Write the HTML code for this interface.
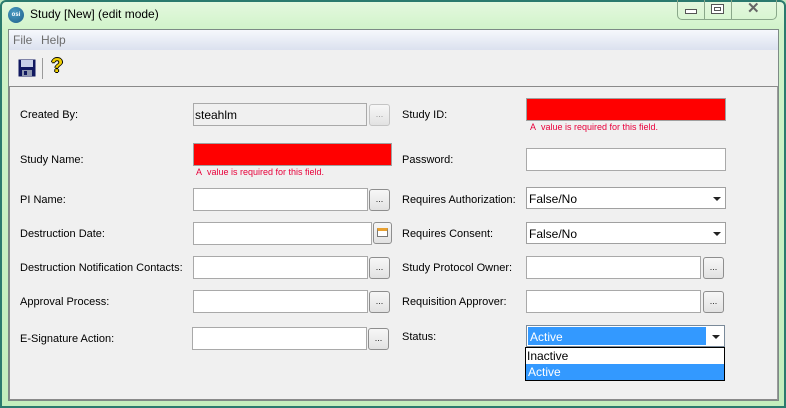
<!DOCTYPE html>
<html><head><meta charset="utf-8"><style>
*{margin:0;padding:0;box-sizing:border-box}
body{width:786px;height:408px;overflow:hidden;font-family:"Liberation Sans",Arial,sans-serif;font-size:11px;color:#000;position:relative;background:linear-gradient(#bfe9bf,#c8f0c0 40%,#b8e8b4);}
.a{position:absolute}
.frame{left:0;top:0;width:786px;height:408px;border:2px solid #2b7a6e;border-radius:6px 6px 0 0;background:linear-gradient(180deg,#e4f8de 0,#cff3c8 30px,#c3eebd 100%)}
.title{left:30px;top:7px;font-size:12px;color:#000}
.content{left:8px;top:29px;width:771px;height:372px;background:#f0f0f0;border:1px solid #7d8a86}
.menu{left:9px;top:30px;width:769px;height:20px;background:linear-gradient(#f6f8fc,#dbe1ef)}
.menu span{position:absolute;top:3px;color:#6d6d6d;font-size:12px}
.panel{left:9px;top:86px;width:769px;height:314px;border:1px solid #8a8a8a;border-right-color:#9a9a9a;background:#f0f0f0}
.lbl{position:absolute;font-size:11px;white-space:nowrap}
.in{position:absolute;background:#fff;border:1px solid #a9a9a9;height:23px}
.red{background:#ff0000;border-color:#a0a0a0}
.err{position:absolute;color:#e8003a;font-size:9px;white-space:nowrap}
.btn{position:absolute;width:21px;height:22px;border:1px solid #8e8e8e;border-radius:3px;background:linear-gradient(#f7f7f7,#e2e2e2);font-size:9px;text-align:center;line-height:19px;color:#222}
.cb{position:absolute;background:#fff;border:1px solid #a0a0a0;height:22px;padding:4px 2px;font-size:12px}
.cb .ar{position:absolute;right:4px;top:9px;width:0;height:0;border-left:4px solid transparent;border-right:4px solid transparent;border-top:4px solid #222}
</style></head><body>
<div class="a frame"></div>
<div class="a" style="left:8px;top:7px;width:16px;height:16px;border-radius:50%;background:radial-gradient(circle at 40% 35%,#4c9cc4,#1e5f88);color:#fff;font-size:6px;line-height:16px;text-align:center;font-weight:bold">osi</div>
<div class="a title">Study [New] (edit mode)</div>
<div class="a" style="left:677px;top:0;width:100px;height:20px;border:1px solid #8aa88a;border-top:none;border-radius:0 0 5px 5px"></div>
<div class="a" style="left:704px;top:0;width:1px;height:20px;background:#8aa88a"></div>
<div class="a" style="left:731px;top:0;width:1px;height:20px;background:#8aa88a"></div>
<div class="a" style="left:685px;top:9px;width:12px;height:5px;border:1px solid #555;background:#fff"></div>
<div class="a" style="left:711px;top:4px;width:13px;height:10px;border:1px solid #555;background:#fff"><div style="margin:2px;width:7px;height:4px;border:1px solid #555"></div></div>
<div class="a" style="left:747px;top:-1px;font-size:15px;color:#666;font-weight:bold">✕</div>
<div class="a content"></div>
<div class="a menu"><span style="left:4px">File</span><span style="left:32px">Help</span></div>
<svg class="a" style="left:18px;top:59px" width="18" height="18" viewBox="0 0 18 18"><rect x="0.5" y="0.5" width="17" height="17" fill="#101860"/><rect x="3" y="1" width="12" height="7" fill="#c8d0e8"/><rect x="4" y="11" width="10" height="6" fill="#9098b0"/><rect x="6" y="12" width="3" height="4" fill="#101860"/></svg>
<div class="a" style="left:42px;top:58px;width:1px;height:21px;background:#9a9a9a"></div>
<div class="a" style="left:51px;top:55px;font-size:20px;font-weight:bold;color:#f0d000;text-shadow:1px 0 #000,-1px 0 #000,0 1px #000,0 -1px #000">?</div>
<div class="a panel"></div>

<div class="lbl" style="left:20px;top:109px">Created By:</div>
<div class="in" style="left:193px;top:103px;width:174px;background:#f0f0f0;padding:4px 1px;font-size:12px">steahlm</div>
<div class="btn" style="left:369px;top:104px;color:#999;border-color:#c4c4c4">...</div>
<div class="lbl" style="left:20px;top:154px">Study Name:</div>
<div class="in red" style="left:193px;top:143px;width:199px"></div>
<div class="err" style="left:196px;top:167px">A&nbsp; value is required for this field.</div>
<div class="lbl" style="left:20px;top:194px">PI Name:</div>
<div class="in" style="left:193px;top:188px;width:175px"></div><div class="btn" style="left:369px;top:189px">...</div>
<div class="lbl" style="left:20px;top:228px">Destruction Date:</div>
<div class="in" style="left:193px;top:222px;width:179px"></div>
<div class="btn" style="left:373px;top:222px;width:19px"><div style="margin:5px auto 0;width:11px;height:9px;border:1px solid #777;border-top:3px solid #e8a030;background:#fff"></div></div>
<div class="lbl" style="left:20px;top:262px">Destruction Notification Contacts:</div>
<div class="in" style="left:193px;top:256px;width:175px"></div><div class="btn" style="left:369px;top:257px">...</div>
<div class="lbl" style="left:20px;top:296px">Approval Process:</div>
<div class="in" style="left:193px;top:290px;width:175px"></div><div class="btn" style="left:369px;top:291px">...</div>
<div class="lbl" style="left:20px;top:333px">E-Signature Action:</div>
<div class="in" style="left:192px;top:327px;width:175px"></div><div class="btn" style="left:368px;top:328px">...</div>

<div class="lbl" style="left:402px;top:109px">Study ID:</div>
<div class="in red" style="left:526px;top:98px;width:200px"></div>
<div class="err" style="left:530px;top:122px">A&nbsp; value is required for this field.</div>
<div class="lbl" style="left:402px;top:154px">Password:</div>
<div class="in" style="left:526px;top:148px;width:200px"></div>
<div class="lbl" style="left:402px;top:194px">Requires Authorization:</div>
<div class="cb" style="left:526px;top:187px;width:200px">False/No<span class="ar"></span></div>
<div class="lbl" style="left:402px;top:228px">Requires Consent:</div>
<div class="cb" style="left:526px;top:222px;width:200px">False/No<span class="ar"></span></div>
<div class="lbl" style="left:402px;top:262px">Study Protocol Owner:</div>
<div class="in" style="left:526px;top:256px;width:175px"></div><div class="btn" style="left:703px;top:257px">...</div>
<div class="lbl" style="left:402px;top:296px">Requisition Approver:</div>
<div class="in" style="left:526px;top:290px;width:175px"></div><div class="btn" style="left:703px;top:291px">...</div>
<div class="lbl" style="left:402px;top:331px">Status:</div>
<div class="cb" style="left:526px;top:325px;width:199px;background:#fff;border-color:#7a8a9a"><div style="position:absolute;left:1px;top:1px;width:178px;height:18px;background:#3399ff;color:#fff;padding:3px 2px;font-size:12px">Active</div><span class="ar"></span></div>
<div class="a" style="left:525px;top:347px;width:200px;height:34px;border:1px solid #000;background:#fff;font-size:12px">
<div style="height:16px;padding:1px 0 0 1px">Inactive</div>
<div style="height:16px;background:#3399ff;color:#fff;padding:1px 0 0 2px">Active</div></div>
</body></html>
